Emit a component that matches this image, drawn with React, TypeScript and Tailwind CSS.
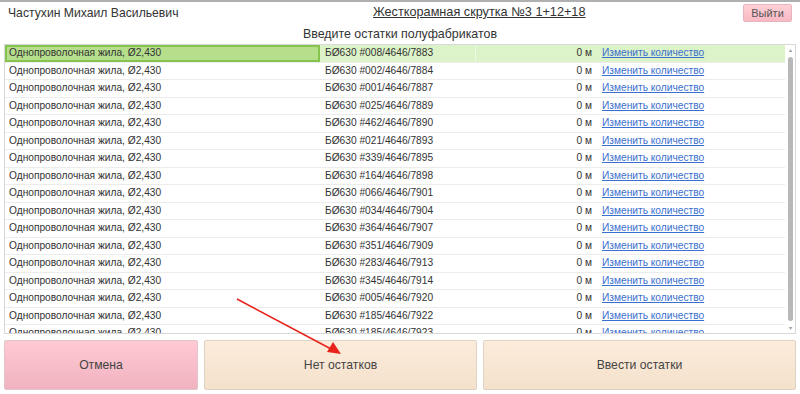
const rows = [
    '#008/4646/7883',
    '#002/4646/7884',
    '#001/4646/7887',
    '#025/4646/7889',
    '#462/4646/7890',
    '#021/4646/7893',
    '#339/4646/7895',
    '#164/4646/7898',
    '#066/4646/7901',
    '#034/4646/7904',
    '#364/4646/7907',
    '#351/4646/7909',
    '#283/4646/7913',
    '#345/4646/7914',
    '#005/4646/7920',
    '#185/4646/7922',
    '#185/4646/7923',
];

function Row({ code, active }: { code: string; active: boolean }) {
    return (
        <div
            className={`flex h-[17.5px] shrink-0 items-center border-b border-[#ececec] text-[10.2px] leading-none text-[#333] ${
                active ? 'bg-[#dcf2c8]' : 'bg-white'
            }`}
        >
            <div
                className={`flex h-full w-[315px] items-center pl-[2px] ${
                    active ? 'border-2 border-[#86c44e] bg-[#b6df8c]' : 'border-2 border-transparent'
                }`}
            >
                Однопроволочная жила, Ø2,430
            </div>
            <div className="w-[155px] pl-[5px]">БØ630 {code}</div>
            <div className={`flex h-full w-[122px] items-center justify-end pr-[5px] ${active ? 'border-l border-[#eef8e6]' : ''}`}>
                0 м
            </div>
            <div className="pl-[5px]">
                <a href="#" className="text-[#3a6fcf] underline">
                    Изменить количество
                </a>
            </div>
        </div>
    );
}

export default function App() {
    return (
        <div
            className="relative flex h-[394px] w-[800px] flex-col overflow-hidden border-t-2 border-[#b0b0b0] bg-white"
            style={{ fontFamily: '"Liberation Sans", Arial, sans-serif' }}
        >
            <div className="flex h-[22px] items-center pr-[8px] pl-[8px]">
                <span className="w-[365px] text-[12.2px] text-[#333]">Частухин Михаил Васильевич</span>
                <span className="text-[12.7px] text-[#333] underline">Жесткорамная скрутка №3 1+12+18</span>
                <div className="flex-1" />
                <button className="h-[18px] w-[49px] rounded-[2px] border border-[#e8b4bd] bg-gradient-to-b from-[#ffd0d6] to-[#f8b9c3] text-[11px] leading-none text-[#555]">
                    Выйти
                </button>
            </div>

            <div className="flex h-[20px] items-center justify-center text-[12.4px] text-[#333]">
                Введите остатки полуфабрикатов
            </div>

            <div className="mx-[4px] flex h-[290px] border border-[#d8d8d8]">
                <div className="flex flex-1 flex-col overflow-hidden">
                    {rows.map((code, i) => (
                        <Row key={code + i} code={code} active={i === 0} />
                    ))}
                </div>
                <div className="flex w-[10px] flex-col items-center bg-white">
                    <div className="mt-[2px] text-[6px] leading-none text-[#999]">▴</div>
                    <div className="mt-[4px] w-[5px] flex-1 rounded-[3px] bg-[#b8b8b8]" />
                    <div className="mt-[4px] mb-[2px] text-[6px] leading-none text-[#999]">▾</div>
                </div>
            </div>

            <div className="mx-[4px] mt-[6px] flex h-[50px] gap-[6px]">
                <button className="w-[194px] rounded-[2px] border border-[#e3c4ca] bg-gradient-to-b from-[#ffc9d3] to-[#f0b3c0] text-[12.2px] text-[#444]">
                    Отмена
                </button>
                <button className="w-[273px] rounded-[2px] border border-[#ddd2c6] bg-gradient-to-b from-[#fdecdb] to-[#f3e1cc] text-[12.2px] text-[#444]">
                    Нет остатков
                </button>
                <button className="flex-1 rounded-[2px] border border-[#ddd2c6] bg-gradient-to-b from-[#fdecdb] to-[#f3e1cc] text-[12.2px] text-[#444]">
                    Ввести остатки
                </button>
            </div>

            <svg className="pointer-events-none absolute top-0 left-0" width="800" height="394">
                <line x1="237" y1="297" x2="333" y2="348" stroke="#e8231c" strokeWidth="1.6" />
                <polygon points="341,352 327,350 333,340" fill="#e8231c" />
            </svg>
        </div>
    );
}
